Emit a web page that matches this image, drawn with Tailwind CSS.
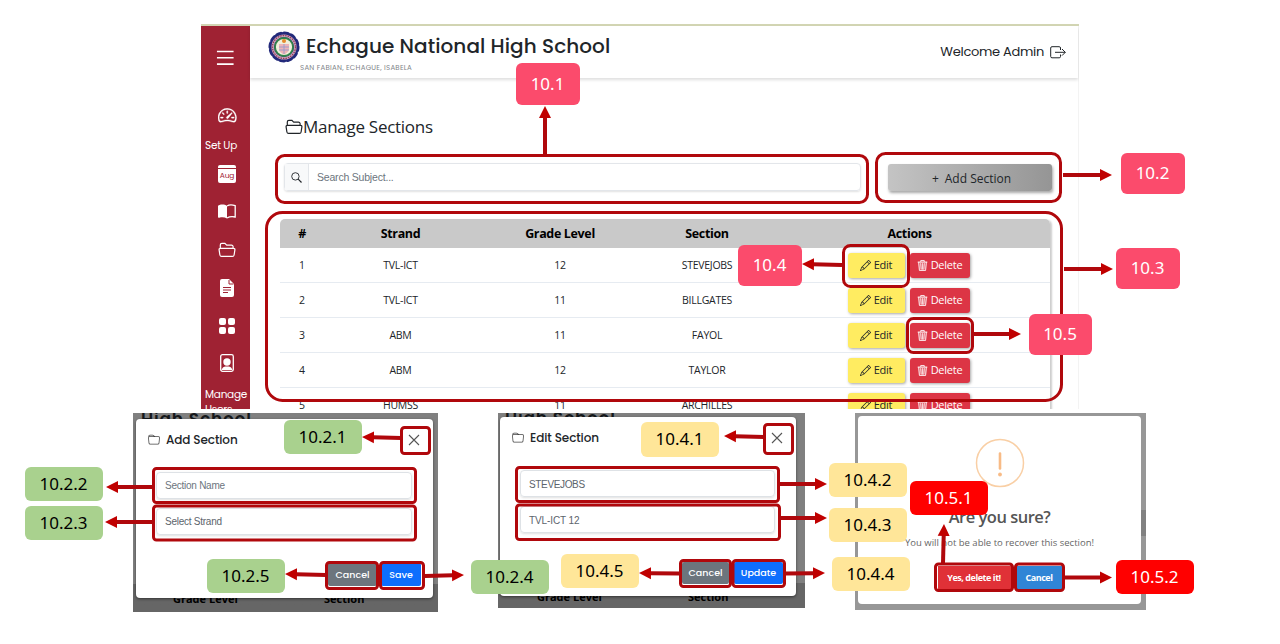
<!DOCTYPE html>
<html lang="en">
<head>
<meta charset="utf-8">
<title>Manage Sections guide</title>
<script src="https://cdn.jsdelivr.net/npm/@tailwindcss/browser@4"></script>
</head>
<body class="relative w-[1280px] h-[644px] overflow-hidden bg-white font-['Poppins','Inter',sans-serif] text-[#212529]">

<svg class="hidden">
  <symbol id="folder" viewBox="0 0 16 16"><path d="M.54 3.87.5 3a2 2 0 0 1 2-2h3.672a2 2 0 0 1 1.414.586l.828.828A2 2 0 0 0 9.828 3h3.982a2 2 0 0 1 1.992 2.181l-.637 7A2 2 0 0 1 13.174 14H2.826a2 2 0 0 1-1.991-1.819l-.637-7a2 2 0 0 1 .342-1.31zM2.19 4a1 1 0 0 0-.996 1.09l.637 7a1 1 0 0 0 .995.91h10.348a1 1 0 0 0 .995-.91l.637-7A1 1 0 0 0 13.81 4zm4.69-1.707A1 1 0 0 0 6.172 2H2.5a1 1 0 0 0-1 .981l.006.139q.323-.119.684-.12h5.396z"/></symbol>
  <symbol id="folder-open" viewBox="0 0 18 16"><path d="M2.300 6.300V3A1.600 1.600 0 0 1 3.900 1.400h3l1.800 1.800h4.800a1.600 1.600 0 0 1 1.600 1.600v1.500M2.400 6.300h13.200a1.300 1.300 0 0 1 1.300 1.500l-.8 5.200a1.700 1.700 0 0 1-1.700 1.400H3.600A1.700 1.700 0 0 1 1.900 13l-.8-5.200a1.300 1.300 0 0 1 1.300-1.500z" fill="none" stroke="currentColor" stroke-width="1.200"/></symbol>
  <symbol id="pencil" viewBox="0 0 16 16"><path d="M12.146.146a.5.5 0 0 1 .708 0l3 3a.5.5 0 0 1 0 .708l-10 10a.5.5 0 0 1-.168.11l-5 2a.5.5 0 0 1-.65-.65l2-5a.5.5 0 0 1 .11-.168zM11.207 2.5 13.5 4.793 14.793 3.5 12.5 1.207zm1.586 3L10.5 3.207 4 9.707V10h.5a.5.5 0 0 1 .5.5v.5h.5a.5.5 0 0 1 .5.5v.5h.293zm-9.761 5.175-.106.106-1.528 3.821 3.821-1.528.106-.106A.5.5 0 0 1 5 12.5V12h-.5a.5.5 0 0 1-.5-.5V11h-.5a.5.5 0 0 1-.468-.325"/></symbol>
  <symbol id="trash" viewBox="0 0 16 16"><path d="M6.5 1h3a.5.5 0 0 1 .5.5v1H6v-1a.5.5 0 0 1 .5-.5M11 2.5v-1A1.5 1.5 0 0 0 9.5 0h-3A1.5 1.5 0 0 0 5 1.5v1H1.5a.5.5 0 0 0 0 1h.538l.853 10.66A2 2 0 0 0 4.885 16h6.23a2 2 0 0 0 1.994-1.84l.853-10.66h.538a.5.5 0 0 0 0-1zm1.958 1-.846 10.58a1 1 0 0 1-.997.92h-6.23a1 1 0 0 1-.997-.92L3.042 3.5zm-7.487 1a.5.5 0 0 1 .528.47l.5 8.5a.5.5 0 0 1-.998.06L5 5.03a.5.5 0 0 1 .47-.53Zm5.058 0a.5.5 0 0 1 .47.53l-.5 8.5a.5.5 0 1 1-.998-.06l.5-8.5a.5.5 0 0 1 .528-.47M8 4.5a.5.5 0 0 1 .5.5v8.500a.5.5 0 0 1-1 0V5a.5.5 0 0 1 .5-.5"/></symbol>
  <symbol id="close" viewBox="0 0 12 12"><path d="M1 1 11 11M11 1 1 11" stroke="currentColor" stroke-width="1.1" fill="none"/></symbol>
</svg>

<!-- Manage Sections page -->
<section class="absolute left-[201px] top-[24px] w-[878px] h-[385px] flex flex-col overflow-hidden bg-white">
  <div class="h-[2px] shrink-0 bg-[#d2d5b3]"></div>
  <div class="flex flex-1 min-h-0">
    <aside class="w-[49px] shrink-0 bg-[#9f2233] text-white overflow-hidden">
      <svg class="ml-[15px] mt-[23px] block w-[19px] h-[18px]" viewBox="0 0 20 18" stroke="currentColor" stroke-width="1.7"><path d="M1 2.200h17.500M1 8.800h17.500M1 15.400h17.500"/></svg>
      <svg class="ml-[17px] mt-[39px] block w-[18.500px] h-[18.500px]" viewBox="0 0 16 16" fill="currentColor" stroke="currentColor" stroke-width=".3"><path d="M8 4a.5.5 0 0 1 .5.5V6a.5.5 0 0 1-1 0V4.500A.5.5 0 0 1 8 4M3.732 5.732a.5.5 0 0 1 .707 0l.915.914a.5.5 0 1 1-.708.708l-.914-.915a.5.5 0 0 1 0-.707M2 10a.5.5 0 0 1 .5-.5h1.586a.5.5 0 0 1 0 1H2.500A.5.5 0 0 1 2 10m9.500 0a.5.5 0 0 1 .5-.5h1.500a.5.5 0 0 1 0 1H12a.5.5 0 0 1-.5-.5m.754-4.246a.39.39 0 0 0-.527-.02L7.547 9.310a.91.91 0 1 0 1.302 1.258l3.434-4.297a.39.39 0 0 0-.029-.518z"/><path fill-rule="evenodd" d="M0 10a8 8 0 1 1 15.547 2.661c-.442 1.253-1.845 1.602-2.932 1.250C11.309 13.488 9.475 13 8 13c-1.474 0-3.310.488-4.615.911-1.087.352-2.490.003-2.932-1.250A8 8 0 0 1 0 10m8-7a7 7 0 0 0-6.603 9.329c.203.575.923.876 1.680.630C4.397 12.533 6.358 12 8 12s3.604.532 4.923.960c.757.245 1.477-.056 1.680-.631A7 7 0 0 0 8 3"/></svg>
      <div class="ml-[4px] mt-[13px] h-[16px] leading-[16px] text-[10.500px] tracking-[-0.25px] whitespace-nowrap">Set Up</div>
      <div class="ml-[17px] mt-[11px] w-[18px] h-[18px] rounded-[2px] bg-white">
        <div class="h-[4px] border-b border-[#9f2233]"></div>
        <div class="text-[7.500px] leading-[13px] text-center text-[#9f2233] tracking-[-0.1px]">Aug</div>
      </div>
      <svg class="ml-[17px] mt-[21px] block w-[18px] h-[15px]" viewBox="0 0 18 15"><path d="M9 2C7 .3 3.500.3 1.500 1 .6 1.200 0 1.500 0 2v11c0 .8.5.9 1.200.7C4 13 6.500 13 9 14.500z" fill="#fff"/><path d="M9 2c2-1.400 5-1.500 8.200-.4V13C14 12.200 11.500 12.500 9 14" fill="none" stroke="#fff" stroke-width="1.300"/></svg>
      <svg class="ml-[17px] mt-[23px] block w-[18px] h-[16px]"><use href="#folder-open"/></svg>
      <svg class="ml-[19px] mt-[21px] block w-[14px] h-[18px]" viewBox="0 0 14 18"><path d="M2 0h7l5 5v11a2 2 0 0 1-2 2H2a2 2 0 0 1-2-2V2a2 2 0 0 1 2-2" fill="#fff"/><path d="M9 1v4h4.500M3 8.500h8M3 11h8M3 13.500h5" stroke="#9f2233" stroke-width="1" fill="none"/></svg>
      <div class="ml-[18px] mt-[21px] grid grid-cols-2 gap-[2px] w-[16px] h-[16px]"><i class="bg-white rounded-[2px]"></i><i class="bg-white rounded-[2px]"></i><i class="bg-white rounded-[2px]"></i><i class="bg-white rounded-[2px]"></i></div>
      <svg class="ml-[19px] mt-[20px] block w-[14px] h-[18px]" viewBox="0 0 14 18"><rect x=".7" y=".7" width="12.600" height="16.600" rx="1.800" fill="none" stroke="#fff" stroke-width="1.300"/><circle cx="7" cy="8" r="3.700" fill="#fff"/><path d="M1.500 16c1-3.200 3-3.600 5.500-3.600s4.500.4 5.500 3.600z" fill="#fff"/></svg>
      <div class="ml-[4px] mt-[15px] leading-[15px] text-[10.500px] tracking-[-0.25px]">Manage<br>Users</div>
    </aside>

    <div class="flex-1 min-w-0 border-r border-[#f3f3f3]">
      <header class="h-[52px] flex items-start shadow-[0_2px_3px_rgba(0,0,0,0.13)]">
        <svg class="ml-[18px] mt-[5px] w-[32px] h-[32px] shrink-0" viewBox="0 0 32 32">
          <circle cx="16" cy="16" r="13.900" fill="#22297a"/>
          <circle cx="16" cy="16" r="12.800" fill="none" stroke="#22297a" stroke-width="5.400" stroke-linecap="round" stroke-dasharray="3 3.702"/>
          <circle cx="16" cy="16" r="11.300" fill="none" stroke="#c9a6c0" stroke-width="2.600"/>
          <circle cx="16" cy="16" r="11.500" fill="none" stroke="#963b56" stroke-width="1.300" stroke-dasharray="1.500 1"/>
          <circle cx="16" cy="16" r="9" fill="#f1f0dc" stroke="#31834a" stroke-width="1.800"/>
          <path d="M11 13h10v5c0 3-3 4.500-5 5.500-2-1-5-2.500-5-5.500z" fill="#efb4b8"/>
          <path d="M11 16h10M11 19h10M16 13v10" stroke="#8d9cd0" stroke-width=".8"/>
          <circle cx="16" cy="10" r="2" fill="#e58a2b"/>
        </svg>
        <div class="flex-1">
          <h1 class="ml-[6px] mt-[5px] h-[30px] leading-[30px] text-[20px] font-medium tracking-[0.06px] whitespace-nowrap">Echague National High School</h1>
          <p class="h-[12px] leading-[13px] text-[7px] tracking-[0.27px] text-[#808488] whitespace-nowrap">SAN FABIAN, ECHAGUE, ISABELA</p>
        </div>
        <div class="mr-[12px] mt-[16px] flex items-center gap-[6px] h-[20px]">
          <span class="text-[13px] leading-[20px] tracking-[-0.3px] whitespace-nowrap">Welcome Admin</span>
          <svg class="w-[16px] h-[13px]" viewBox="0 0 16 13" fill="none" stroke="#212529" stroke-width="1"><path d="M10.500 4V2a1.300 1.300 0 0 0-1.300-1.300H2A1.300 1.300 0 0 0 .7 2v8.500A1.300 1.300 0 0 0 2 11.800h7.200a1.300 1.300 0 0 0 1.300-1.300v-2M5 6.300h10.300M12 3l3.300 3.300L12 9.600"/></svg>
        </div>
      </header>

      <main class="pl-[30px] pt-[38px]">
        <h2 class="ml-[5px] h-[22px] flex items-center font-['Open_Sans',sans-serif] text-[17px] leading-[22px] tracking-[-0.28px] whitespace-nowrap"><svg class="w-[18px] h-[16px] shrink-0"><use href="#folder-open"/></svg>Manage Sections</h2>
        <div class="mt-[25px] ml-[4px] h-[28px] flex">
          <div class="flex w-[577px] rounded-[4px] border border-[#e3e6ea] shadow-[0_1px_2px_rgba(0,0,0,0.12)]">
            <div class="w-[24px] bg-[#f8f9fa] border-r border-[#e3e6ea] flex items-center justify-center"><svg class="w-[11px] h-[11px]" viewBox="0 0 11 11" fill="none" stroke="#212529" stroke-width=".9"><circle cx="4.400" cy="4.400" r="3.700"/><path d="m7.200 7.200 3.300 3.300" stroke-width="1.200"/></svg></div>
            <div class="pl-[8px] font-['Liberation_Sans',sans-serif] text-[10.500px] tracking-[-0.2px] leading-[26px] text-[#6c757d]">Search Subject...</div>
          </div>
          <div class="ml-[27px] mt-px w-[164px] h-[27px] rounded-[3px] bg-linear-to-r from-[#c4c4c4] to-[#959595] shadow-[1px_2px_3px_rgba(0,0,0,0.35)] flex items-center justify-center gap-[6px] pl-[3px] pt-[2px] font-['Open_Sans',sans-serif] text-[12px]"><span>+</span><span>Add Section</span></div>
        </div>

        <div class="mt-[27.500px] w-[770px] h-[200px] rounded-t-[5px] overflow-hidden shadow-[2px_1px_2px_rgba(0,0,0,0.2)] font-['Open_Sans',sans-serif]">
          <div class="grid grid-cols-[44px_153px_166px_128px_1fr] h-[29px] pt-[2px] items-center bg-[#c9c9c9] text-center text-[12.500px] tracking-[-0.35px] font-bold text-black">
            <div>#</div><div>Strand</div><div>Grade Level</div><div>Section</div><div class="pr-[2px]">Actions</div>
          </div>
          <div id="rows" class="text-[10.500px] tracking-[-0.25px]"></div>
        </div>
      </main>
    </div>
  </div>
</section>

<!-- Add Section dialog -->
<section class="absolute left-[133px] top-[413px] w-[305px] h-[199px] overflow-hidden bg-linear-to-b from-[#808080] from-86% to-[#666] to-86%">
  <div class="absolute left-[8px] top-[-5px] text-[17px] leading-[22px] font-semibold text-[#15181b] tracking-[0.8px] whitespace-nowrap">High School</div>
  <div class="absolute left-[40px] top-[177px] text-[11px] leading-[18px] font-bold text-black font-['Open_Sans'] whitespace-nowrap">Grade Level</div>
  <div class="absolute left-[191px] top-[177px] text-[11px] leading-[18px] font-bold text-black font-['Open_Sans'] whitespace-nowrap">Section</div>
  <div class="relative ml-[3px] mt-[6px] w-[297px] h-[179px] rounded-[4px] bg-white shadow-[0_1px_3px_rgba(0,0,0,0.5)] px-[20px]">
    <div class="-ml-[8px] pt-[11px] flex items-center h-[31px]">
      <svg class="w-[12px] h-[12px]" fill="#444"><use href="#folder"/></svg>
      <span class="ml-[6px] text-[12px] font-medium tracking-[-0.1px]">Add Section</span>
      <svg class="ml-auto mr-[-7px] w-[12px] h-[12px] text-[#555]"><use href="#close"/></svg>
    </div>
    <div class="mt-[22px] w-[256px] h-[27px] rounded-[4px] border border-[#dee2e6] shadow-sm pl-[8px] font-['Liberation_Sans'] text-[10px] tracking-[-0.25px] leading-[25px] text-[#6c757d]">Section Name</div>
    <div class="mt-[9px] w-[256px] h-[27px] rounded-[4px] border border-[#dee2e6] shadow-sm pl-[8px] font-['Liberation_Sans'] text-[10px] tracking-[-0.25px] leading-[25px] text-[#5c646c]">Select Strand</div>
    <div class="mt-[28px] flex justify-end gap-[4px] mr-[-8px] text-[9.500px] leading-[23px] text-white text-center font-medium">
      <div class="w-[49px] h-[23px] rounded-[2px] bg-[#6c757d]">Cancel</div><div class="w-[40px] h-[23px] rounded-[2px] bg-[#0d6efd]">Save</div>
    </div>
  </div>
</section>

<!-- Edit Section dialog -->
<section class="absolute left-[498px] top-[413px] w-[307px] h-[195px] overflow-hidden bg-linear-to-b from-[#808080] from-87% to-[#666] to-87%">
  <div class="absolute left-[7px] top-[-6px] text-[17px] leading-[22px] font-semibold text-[#15181b] tracking-[0.8px] whitespace-nowrap">High School</div>
  <div class="absolute left-[39px] top-[175px] text-[11px] leading-[18px] font-bold text-black font-['Open_Sans'] whitespace-nowrap">Grade Level</div>
  <div class="absolute left-[190px] top-[175px] text-[11px] leading-[18px] font-bold text-black font-['Open_Sans'] whitespace-nowrap">Section</div>
  <div class="relative ml-[2px] mt-[4px] w-[296px] h-[179px] rounded-[4px] bg-white shadow-[0_1px_3px_rgba(0,0,0,0.5)] px-[20px]">
    <div class="-ml-[8px] pt-[11px] flex items-center h-[31px]">
      <svg class="w-[12px] h-[12px]" fill="#444"><use href="#folder"/></svg>
      <span class="ml-[6px] text-[12px] font-medium tracking-[-0.1px]">Edit Section</span>
      <svg class="ml-auto mr-[-7px] w-[12px] h-[12px] text-[#555]"><use href="#close"/></svg>
    </div>
    <div class="mt-[22px] w-[255px] h-[27px] rounded-[4px] border border-[#dee2e6] shadow-sm pl-[8px] font-['Liberation_Sans'] text-[10px] tracking-[-0.35px] leading-[27px] text-[#5c646c]">STEVEJOBS</div>
    <div class="mt-[9px] w-[255px] h-[27px] rounded-[4px] border border-[#dee2e6] shadow-sm pl-[8px] font-['Liberation_Sans'] text-[10px] tracking-[-0.1px] leading-[27px] text-[#5c646c]">TVL-ICT 12</div>
    <div class="mt-[29px] flex justify-end gap-[5px] mr-[-7px] text-[9.500px] leading-[22px] text-white text-center font-medium">
      <div class="w-[47px] h-[22px] rounded-[2px] bg-[#6c757d]">Cancel</div><div class="w-[49px] h-[22px] rounded-[2px] bg-[#0d6efd]">Update</div>
    </div>
  </div>
</section>

<!-- Delete confirmation -->
<section class="absolute left-[855px] top-[413px] w-[291px] h-[197px] overflow-hidden bg-[#979797]">
  <div class="absolute right-0 top-[97px] w-[6px] h-[26px] bg-[#818181]"></div>
  <div class="relative ml-[3px] mt-[3px] w-[283px] h-[188px] rounded-[4px] bg-white flex flex-col items-center font-['Open_Sans',sans-serif]">
    <svg class="mt-[22px] w-[50px] h-[50px] shrink-0" viewBox="0 0 50 50"><circle cx="25" cy="25" r="23.500" fill="none" stroke="#f9cfa5" stroke-width="1.500"/><path d="M25 15.500v15" stroke="#f8bb86" stroke-width="2.600" stroke-linecap="round"/><circle cx="25" cy="36.500" r="1.900" fill="#f8bb86"/></svg>
    <div class="mt-[18px] leading-[22px] text-[16.500px] tracking-[-0.5px] font-semibold text-[#555] whitespace-nowrap">Are you sure?</div>
    <div class="mt-[7px] leading-[16px] text-[9.500px] text-[#666] whitespace-nowrap">You will not be able to recover this section!</div>
    <div class="mt-[15px] flex gap-[6px] text-[9px] tracking-[-0.45px] leading-[23px] font-bold text-white text-center">
      <div class="w-[73px] h-[23px] bg-[#e03137] whitespace-nowrap">Yes, delete it!</div><div class="w-[45px] h-[23px] bg-[#3085d6]">Cancel</div>
    </div>
  </div>
</section>

<!-- Highlight frames and arrows -->
<svg class="absolute left-0 top-0" width="1280" height="644" viewBox="0 0 1280 644">
  <defs><marker id="tip" markerUnits="userSpaceOnUse" markerWidth="13" markerHeight="14" refX="1" refY="7" orient="auto"><path d="M0 1 12 7 0 13z" fill="#c00000"/></marker></defs>
  <g id="frames" fill="none" stroke="#b0080c" stroke-width="3"></g>
  <g id="arrows" stroke="#b0080c" stroke-width="4"></g>
</svg>
<div id="labels" class="font-['Noto_Sans',sans-serif] text-[17px]"></div>

<script>
const data = [[1,'TVL-ICT',12,'STEVEJOBS'],[2,'TVL-ICT',11,'BILLGATES'],[3,'ABM',11,'FAYOL'],[4,'ABM',12,'TAYLOR'],[5,'HUMSS',11,'ARCHILLES']];
document.getElementById('rows').innerHTML = data.map(r => `
<div class="grid grid-cols-[44px_153px_166px_128px_1fr] h-[35px] pt-[3px] items-center text-center border-b border-[#e6ebf1]">
  <div>${r[0]}</div><div>${r[1]}</div><div>${r[2]}</div><div>${r[3]}</div>
  <div class="flex justify-center gap-[5px] pr-[4px] -mt-[2px] text-[11px]">
    <div class="w-[57px] h-[25px] rounded-[3px] bg-[#ffec61] shadow-[1px_1px_3px_rgba(0,0,0,0.35)] flex items-center justify-center gap-[3px]"><svg class="w-[11px] h-[11px]" fill="currentColor"><use href="#pencil"/></svg>Edit</div>
    <div class="w-[60px] h-[25px] rounded-[3px] bg-[#dc3545] text-white shadow-[1px_1px_3px_rgba(0,0,0,0.35)] flex items-center justify-center gap-[3px]"><svg class="w-[11px] h-[11px]" fill="currentColor" stroke="currentColor" stroke-width=".4"><use href="#trash"/></svg>Delete</div>
  </div>
</div>`).join('');

// Frames: left, top, right, bottom, corner radius
const frames = [[275,154,869,204,8],[875,152,1062,203,9],[265,211,1063,402,16],[842,244,910,288,7],[906,317,974,354,6],
[400,426,431,455,3],[152,467,417,504,3],[152,504.5,417,541.5,3],[325,561,379,590,3],[379,561,425,590,3],
[763,423,794,455,3],[515,466,780,503,3],[515,503.5,781,541,3],[679,559,732,588,3],[731.5,559,786,588,3],
[934,562.5,1014,592,3],[1014,562.5,1065,592,3]];
document.getElementById('frames').innerHTML = frames.map(([a,b,c,d,r]) => `<rect x="${a+1.5}" y="${b+1.5}" width="${c-a-3}" height="${d-b-3}" rx="${r}"/>`).join('');

// Arrows: tail x, tail y, tip x, tip y
const arrows = [[545,154,545,106],[1063,175,1112,175],[1064,269,1113,269],[842,265,802,264],[974,334,1021,334],
[401,438,362,437],[153,487,106,487],[153,522,105,522],[326,575,285,574],[425,576,464,575],[764,437,724,436],
[779,484,827,484],[781,518,827,518],[680,573.5,639,573],[785,573.5,825,573],[943,563,944,524],[1065,577.5,1112,577.5]];
document.getElementById('arrows').innerHTML = arrows.map(([a,b,c,d]) => {
  const l = Math.hypot(c-a,d-b), k = (l-11)/l;
  return `<line x1="${a}" y1="${b}" x2="${a+(c-a)*k}" y2="${b+(d-b)*k}" marker-end="url(#tip)"/>`;
}).join('');

const tone = {pink:'bg-[#fb4b6c] text-white', green:'bg-[#a9d18e] text-black', sand:'bg-[#ffe699] text-black', red:'bg-[#ff0000] text-white'};
const labels = [['10.1',516,63,64,42,'pink'],['10.2',1121,153,64,41,'pink'],['10.3',1116,248,64,41,'pink'],['10.4',738,245,64,41,'pink'],['10.5',1029,314,63,41,'pink'],
['10.2.1',284,420,78,34,'green'],['10.2.2',25,467,78,34,'green'],['10.2.3',25,506,78,34,'green'],['10.2.5',207,559,78,34,'green'],['10.2.4',471,560,78,34,'green'],
['10.4.1',641,422,78,35,'sand'],['10.4.2',829,463,78,34,'sand'],['10.4.3',829,508,78,34,'sand'],['10.4.5',561,554,78,34,'sand'],['10.4.4',832,557,78,34,'sand'],
['10.5.1',910,481,78,34,'red'],['10.5.2',1116,560,78,34,'red']];
document.getElementById('labels').innerHTML = labels.map(([t,x,y,w,h,c]) => `<div class="absolute flex items-center justify-center rounded-[6px] pb-px pr-px ${tone[c]}" style="left:${x}px;top:${y}px;width:${w}px;height:${h}px">${t}</div>`).join('');
</script>
</body>
</html>
